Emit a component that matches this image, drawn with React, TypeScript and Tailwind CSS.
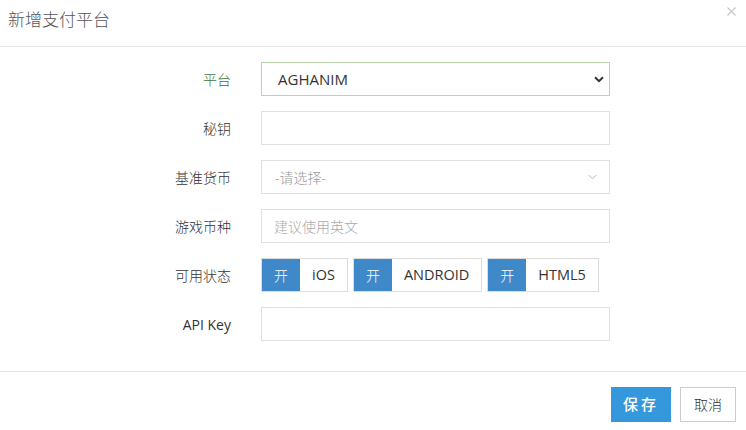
import React from 'react';

const font = { fontFamily: '"Open Sans", "Noto Sans CJK SC", sans-serif' };

const Row = ({ label, green, children }: { label: string; green?: boolean; children: React.ReactNode }) => (
  <div className="flex items-center h-[34px]">
    <div className={`w-[231px] text-right text-[14px] ${green ? 'text-[#3c763d]' : 'text-[#333]'}`}>{label}</div>
    <div className="ml-[30px] w-[349px] h-full">{children}</div>
  </div>
);

const Toggle = ({ name }: { name: string }) => (
  <div className="flex h-[34px] border border-[#ddd] bg-white">
    <div className="w-[38px] bg-[#3f89c9] text-white text-[14px] flex items-center justify-center">开</div>
    <div className="px-[12px] flex items-center text-[14.5px] font-normal text-[#333]">{name}</div>
  </div>
);

export default function App() {
  return (
    <div className="w-[746px] h-[430px] bg-white flex flex-col font-light" style={font}>
      <div className="h-[47px] border-b border-[#e5e5e5] flex items-start justify-between pl-[8px] pr-[10px]">
        <h2 className="text-[17px] text-[#555] leading-none mt-[11px]">新增支付平台</h2>
        <svg width="9" height="9" viewBox="0 0 9 9" className="mt-[7px]">
          <path d="M0.5 0.5 L8.5 8.5 M8.5 0.5 L0.5 8.5" stroke="#c8c8c8" strokeWidth="1.2" />
        </svg>
      </div>

      <div className="flex-1 flex flex-col gap-[15px] pt-[15px]">
        <Row label="平台" green>
          <div className="h-full border border-[#b9d7a8] flex items-center justify-between pl-[16px] pr-[5px] text-[15px] font-normal text-[#333]">
            <span>AGHANIM</span>
            <svg width="10" height="7" viewBox="0 0 10 7">
              <path d="M1 1.2 L5 5.2 L9 1.2" fill="none" stroke="#333" strokeWidth="2" />
            </svg>
          </div>
        </Row>
        <Row label="秘钥">
          <div className="h-full border border-[#e0e0e0]" />
        </Row>
        <Row label="基准货币">
          <div className="h-full border border-[#e0e0e0] flex items-center justify-between pl-[13px] pr-[12px] text-[14px] text-[#999]">
            <span>-请选择-</span>
            <svg width="9" height="6" viewBox="0 0 9 6">
              <path d="M0.5 0.8 L4.5 4.8 L8.5 0.8" fill="none" stroke="#b5b5b5" strokeWidth="1" />
            </svg>
          </div>
        </Row>
        <Row label="游戏币种">
          <div className="h-full border border-[#e0e0e0] flex items-center pl-[12px] text-[14px] text-[#aaa]">
            建议使用英文
          </div>
        </Row>
        <Row label="可用状态">
          <div className="flex gap-[5px]">
            <Toggle name="iOS" />
            <Toggle name="ANDROID" />
            <Toggle name="HTML5" />
          </div>
        </Row>
        <div className="flex items-center h-[34px]">
          <div className="w-[231px] text-right text-[14px] font-normal text-[#333]">API Key</div>
          <div className="ml-[30px] w-[349px] h-full border border-[#e0e0e0]" />
        </div>
      </div>

      <div className="border-t border-[#e5e5e5] flex justify-end gap-[9px] pt-[15px] pb-[8px] pr-[10px]">
        <button className="w-[60px] h-[35px] bg-[#3598dc] text-white text-[15px] tracking-[3px] font-medium">保存</button>
        <button className="w-[56px] h-[35px] border border-[#ccc] bg-white text-[#333] text-[14px]">取消</button>
      </div>
    </div>
  );
}
